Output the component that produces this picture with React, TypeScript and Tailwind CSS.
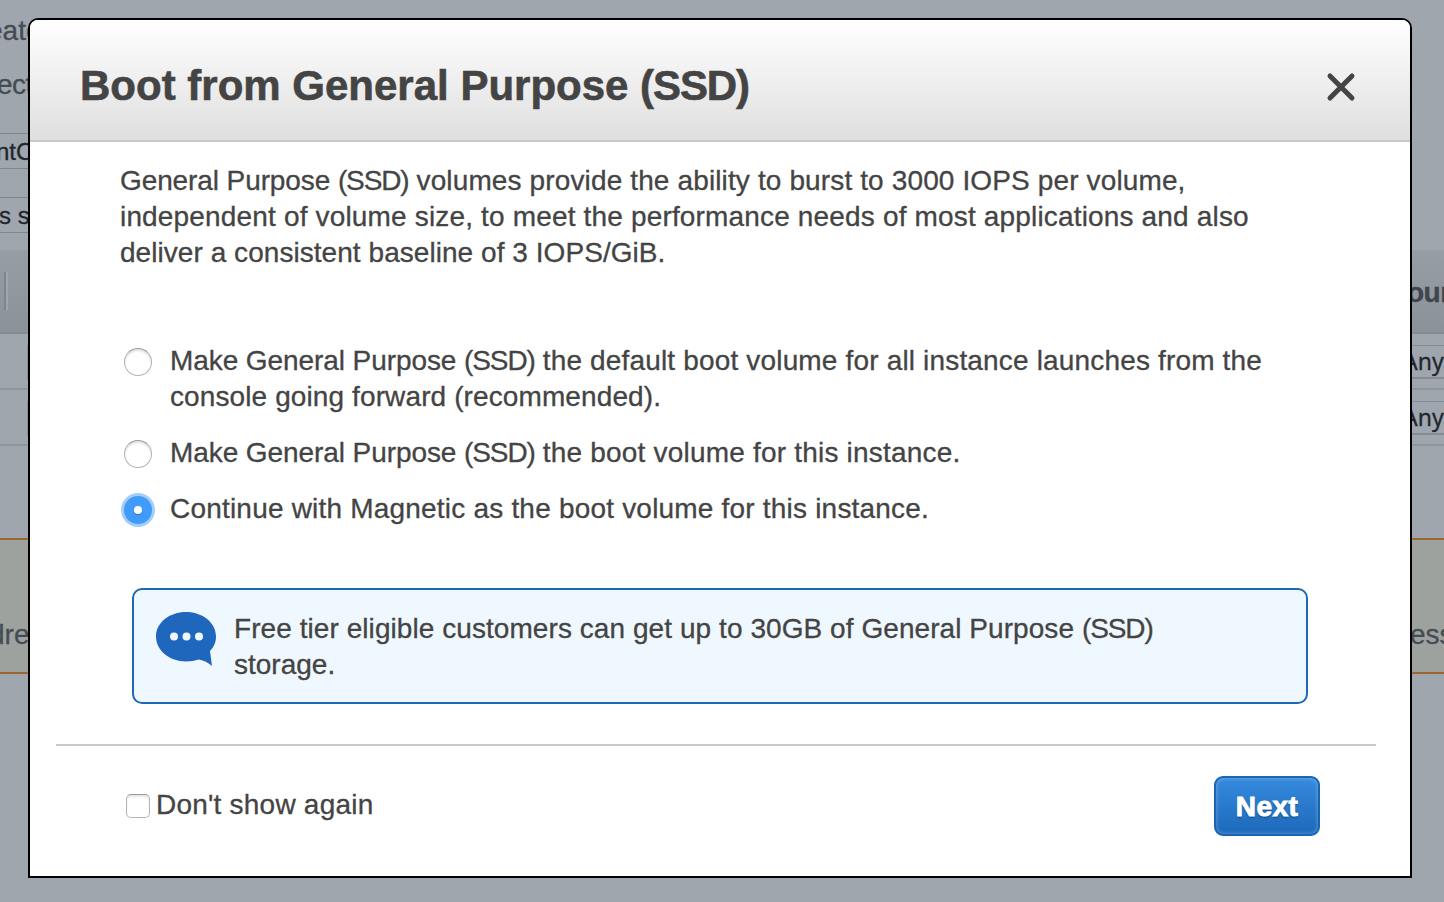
import type { ReactNode } from 'react';

function Line({ className = '', children }: { className?: string; children: ReactNode }) {
  return <span className={`block h-9 whitespace-nowrap pt-px leading-9 ${className}`}>{children}</span>;
}

function Ssd() {
  return <span className="tracking-[-1.1px]">(SSD)</span>;
}

function Radio({ checked = false }: { checked?: boolean }) {
  return checked ? (
    <span className="-mx-[3px] mt-[3px] flex size-[34px] shrink-0 items-center justify-center rounded-full bg-[#a3cdfb]">
      <span className="flex size-7 items-center justify-center rounded-full bg-[#409bfa]">
        <span className="size-2 rounded-full bg-white shadow-[0_1px_1px_rgba(0,0,0,0.25)]" />
      </span>
    </span>
  ) : (
    <span className="mt-[6px] size-7 shrink-0 rounded-full border border-[#b4b4b4] border-t-[#9a9a9a] bg-white shadow-[inset_0_2px_2px_rgba(0,0,0,0.12)]" />
  );
}

function Backdrop() {
  return (
    <div className="flex h-full w-full flex-col overflow-hidden whitespace-nowrap bg-[#9fa6ad] text-[28px] text-[#454c53]">
      <div className="h-[133px] pt-[13px] leading-9">
        <div className="-ml-[13px]">eate</div>
        <div className="-ml-[3px] mt-[18px] tracking-[-0.5px]">ect</div>
      </div>
      <div className="h-9 w-7 border-y border-[#7f868e] text-[24px] leading-[35px] text-[#1f262e]">
        <div className="-ml-[4px]">ntC</div>
      </div>
      <div className="mt-7 h-9 w-7 border-y border-[#7f868e] text-[24px] leading-[35px] text-[#1f262e]">
        <div className="-ml-px">s s</div>
      </div>
      <div className="mt-[17px] flex h-[84px] items-center justify-between border-b-2 border-[#858c94] bg-linear-to-b from-[#979da4] to-[#8c9299]">
        <div className="ml-1 h-[38px] w-1 border-l-2 border-r-2 border-l-[#7f868d] border-r-[#9fa6ad]" />
        <div className="w-[37px] pt-[3px] font-bold tracking-[-0.5px] text-[#3e454d]">our</div>
      </div>
      {[0, 1].map((i) => (
        <div key={i} className="flex h-14 justify-between border-b-2 border-[#8f969e] pt-[11px]">
          <div className="h-[35px] w-7 border-r border-[#858c94]" />
          <div className="h-[34px] w-[41px] border-b-2 border-t border-[#858c94] font-['Noto_Sans','Liberation_Sans',sans-serif] text-[23px] leading-[30px] text-[#1f262e]">Anyw</div>
        </div>
      ))}
      <div className="mt-[92px] flex h-[136px] justify-between overflow-hidden border-y-2 border-[#9b6632] bg-[#9ea29f] pt-[77px] leading-9">
        <span className="-ml-[11px]">dre</span>
        <span className="w-[34px]">ess</span>
      </div>
    </div>
  );
}

export default function App() {
  return (
    <div className="relative h-[902px] w-[1444px] overflow-hidden font-['Liberation_Sans',Arial,sans-serif] [-webkit-text-stroke:0.3px]">
      <Backdrop />
      <div className="absolute left-7 top-[18px] flex h-[860px] w-[1384px] flex-col overflow-hidden rounded-t-[10px] border-2 border-black bg-white text-[28px] text-[#444]">
        <header className="flex h-[122px] shrink-0 items-center justify-between border-b-2 border-[#c8c8c8] bg-linear-to-b from-white to-[#dfdfdf] pl-[50px] pr-[53px]">
          <h1 className="whitespace-nowrap pt-[12px] text-[42px] font-bold leading-[52px] [-webkit-text-stroke:0.6px]">
            Boot from General Purpose <Ssd />
          </h1>
          <svg className="mt-[14px] size-8" viewBox="0 0 32 32" fill="none" stroke="#444" strokeWidth="5" strokeLinecap="round">
            <path d="M5 5 27 27M27 5 5 27" />
          </svg>
        </header>
        <main className="flex flex-col px-[90px] pt-5">
          <p>
            <Line className="tracking-[0.13px]">
              <span className="tracking-[-0.1px]">General Purpose </span><Ssd /> volumes provide the ability to burst to 3000 IOPS per volume,
            </Line>
            <Line className="tracking-[0.165px]">independent of volume size, to meet the performance needs of most applications and also</Line>
            <Line className="tracking-[0.05px]">deliver a consistent baseline of 3 IOPS/GiB.</Line>
          </p>
          <div className="mt-[72px] flex flex-col gap-5 pl-1">
            <label className="flex gap-[18px]">
              <Radio />
              <span>
                <Line className="tracking-[0.165px]">
                  <span className="tracking-[-0.08px]">Make General Purpose </span><Ssd /> the default boot volume for all instance launches from the
                </Line>
                <Line className="tracking-[0.11px]">console going forward (recommended).</Line>
              </span>
            </label>
            <label className="flex gap-[18px]">
              <Radio />
              <Line className="tracking-[0.2px]">
                <span className="tracking-[-0.08px]">Make General Purpose </span><Ssd /> the boot volume for this instance.
              </Line>
            </label>
            <label className="flex h-9 gap-[18px]">
              <Radio checked />
              <Line className="tracking-[0.2px]">Continue with Magnetic as the boot volume for this instance.</Line>
            </label>
          </div>
          <div className="ml-3 mt-[62px] flex h-[116px] w-[1176px] rounded-[10px] border-2 border-[#1c69b5] bg-[#f0f8ff] pl-[22px] pt-5">
            <svg className="mt-[2px] h-[54px] w-[60px]" viewBox="0 0 60 54">
              <path d="M30 0C46.600 0 60 10.700 60 24.500c0 6-2.300 10.500-6 14.500L56 54c-4-3.500-8-5.500-13-6.500-4 1.200-8.500 2-13 2C13.400 49.500 0 38.300 0 24.500S13.400 0 30 0Z" fill="#1f67bd" />
              <circle cx="18" cy="24.500" r="4" fill="#f0f8ff" />
              <circle cx="30.500" cy="24.500" r="4" fill="#f0f8ff" />
              <circle cx="43" cy="24.500" r="4" fill="#f0f8ff" />
            </svg>
            <div className="ml-[18px]">
              <Line className="tracking-[0.065px]">
                Free tier eligible customers can get up to 30GB of General Purpose <Ssd />
              </Line>
              <Line>storage.</Line>
            </div>
          </div>
        </main>
        <footer className="ml-[26px] mt-10 flex w-[1320px] justify-between border-t-2 border-[#cacaca] pl-[70px] pr-14 pt-[30px]">
          <label className="mt-[10px] flex h-9 gap-[6px]">
            <span className="mt-[8px] size-6 rounded-[5px] border border-[#b4b4b4] border-t-[#9a9a9a] bg-white shadow-[inset_0_2px_2px_rgba(0,0,0,0.1)]" />
            <Line className="tracking-[0.22px]">Don't show again</Line>
          </label>
          <button className="flex h-[60px] w-[106px] items-center justify-center rounded-[9px] border-2 border-[#1b66b3] bg-linear-to-b from-[#368ade] to-[#1c69ba] pt-px font-bold tracking-[0.4px] text-white shadow-[inset_0_0_4px_rgba(255,255,255,0.35)] [-webkit-text-stroke:0.9px] [text-shadow:0_2px_2px_rgba(0,0,0,0.3)]">
            Next
          </button>
        </footer>
      </div>
    </div>
  );
}
